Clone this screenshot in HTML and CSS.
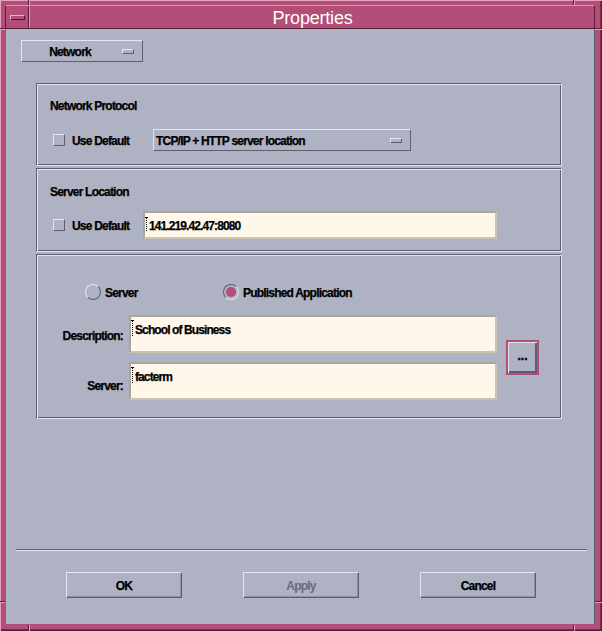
FILE: index.html
```html
<!DOCTYPE html>
<html>
<head>
<meta charset="utf-8">
<title>Properties</title>
<link rel="stylesheet" href="styles.css">
</head>
<body>
<div class="window">
  <span class="tick tick-t1"></span><span class="tick tick-t2"></span>
  <span class="tick tick-b1"></span><span class="tick tick-b2"></span>
  <span class="htick htick-l1"></span><span class="htick htick-l2"></span>
  <span class="htick htick-r1"></span><span class="htick htick-r2"></span>
  <div class="titlebar">
    <div class="menubtn"><span class="menuglyph"></span></div>
    <div class="title">Properties</div>
  </div>
  <div class="client">
    <div class="option option-network">
      <span class="option-label">Network</span>
      <span class="indicator"></span>
    </div>

    <div class="frames">
      <div class="frame frame-protocol">
        <div class="frame-title">Network Protocol</div>
        <div class="row">
          <span class="check"></span>
          <span class="check-label label-protocol">Use Default</span>
          <div class="option option-protocol">
            <span class="option-label">TCP/IP + HTTP server location</span>
            <span class="indicator"></span>
          </div>
        </div>
      </div>

      <div class="frame frame-location">
        <div class="frame-title">Server Location</div>
        <div class="row">
          <span class="check"></span>
          <span class="check-label label-location">Use Default</span>
          <div class="field field-location"><span class="caret"></span>141.219.42.47:8080</div>
        </div>
      </div>

      <div class="frame frame-app">
        <div class="radios">
          <div class="radio-item radio-server">
            <span class="radio"></span><span class="radio-label">Server</span>
          </div>
          <div class="radio-item">
            <span class="radio radio-on"><span class="radio-dot"></span></span><span class="radio-label">Published Application</span>
          </div>
        </div>
        <div class="appgrid">
          <div class="grid-label label-desc">Description:</div>
          <div class="field field-big"><span class="caret"></span>School of Business</div>
          <button class="browse">...</button>
          <div class="grid-label label-server">Server:</div>
          <div class="field field-big"><span class="caret"></span>facterm</div>
        </div>
      </div>
    </div>

    <div class="separator"></div>

    <div class="buttons">
      <button class="btn">OK</button>
      <button class="btn btn-disabled">Apply</button>
      <button class="btn">Cancel</button>
    </div>
  </div>
</div>
</body>
</html>
```
FILE: styles.css
```css
html, body {
  margin: 0;
  padding: 0;
  background: #aeb2c3;
}

body {
  font-family: "Liberation Sans", Arial, sans-serif;
  font-size: 12px;
  font-weight: bold;
  line-height: 14px;
  color: #000;
}

.window {
  position: relative;
  width: 602px;
  height: 631px;
  box-sizing: border-box;
  padding: 5px 7px 7px 6px;
  background: #b24e78;
  display: flex;
  flex-direction: column;
  box-shadow: inset 1px 1px 0 #e2a3bd, inset -1px -1px 0 #5a1d39, inset -2px -2px 0 #7e2f51;
}

/* frame resize handle ticks */
.tick {
  position: absolute;
  width: 1px;
  height: 5px;
  background: #5a1d39;
  box-shadow: 1px 0 0 #e2a3bd;
}
.tick-t1 { left: 28px; top: 0; }
.tick-t2 { left: 573px; top: 0; }
.tick-b1 { left: 28px; bottom: 0; height: 6px; }
.tick-b2 { left: 573px; bottom: 0; height: 6px; }
.htick {
  position: absolute;
  width: 5px;
  height: 1px;
  background: #5a1d39;
  box-shadow: 0 1px 0 #e2a3bd;
}
.htick-l1 { left: 0; top: 28px; }
.htick-l2 { left: 0; top: 601px; }
.htick-r1 { right: 0; top: 28px; width: 7px; }
.htick-r2 { right: 0; top: 601px; width: 7px; }

.titlebar {
  height: 24px;
  margin-left: -1px;
  box-sizing: border-box;
  display: flex;
  align-items: stretch;
  background: #b24e78;
  border-top: 1px solid #dc97b4;
  border-bottom: 1px solid #5a1d39;
  border-left: 1px solid #5a1d39;
  border-right: 1px solid #5a1d39;
}

.menubtn {
  width: 22px;
  display: flex;
  align-items: center;
  border-right: 1px solid #5a1d39;
  box-shadow: 1px 0 0 #dc97b4;
}

.menuglyph {
  display: block;
  width: 13px;
  height: 3px;
  margin-left: 4px;
  margin-top: 1px;
  background: #b24e78;
  border-top: 1px solid #eab2c9;
  border-left: 1px solid #eab2c9;
  border-bottom: 1px solid #4e1731;
  border-right: 1px solid #4e1731;
}

.title {
  flex: 1;
  text-align: center;
  color: #fff;
  font-weight: normal;
  font-size: 18px;
  line-height: 22px;
  padding-top: 1px;
  letter-spacing: -0.2px;
  padding-left: 2px;
}

.client {
  flex: 1;
  background: #aeb2c3;
  display: flex;
  flex-direction: column;
  align-items: flex-start;
  padding-top: 11px;
  box-shadow: inset -1px 0 0 #5b5f70;
  letter-spacing: -0.8px;
  -webkit-text-stroke: 0.25px #000;
}

/* option menus */
.option {
  box-sizing: border-box;
  display: flex;
  align-items: center;
  background: #aeb2c3;
  border-top: 1px solid #e4e6ee;
  border-left: 1px solid #e4e6ee;
  border-bottom: 1px solid #5b5f70;
  border-right: 1px solid #5b5f70;
}

.option-label {
  padding-top: 2px;
}

.option-network {
  margin-left: 15px;
  width: 122px;
  height: 22px;
}
.option-network .option-label {
  flex: 1;
  text-align: center;
  margin-right: 4px;
}

.option-protocol {
  width: 258px;
  height: 22px;
}
.option-protocol .option-label {
  flex: 1;
  padding-left: 2px;
}

.indicator {
  display: block;
  box-sizing: border-box;
  width: 12px;
  height: 5px;
  margin-right: 8px;
  background: #aeb2c3;
  border-top: 1px solid #e4e6ee;
  border-left: 1px solid #e4e6ee;
  border-bottom: 1px solid #5b5f70;
  border-right: 1px solid #5b5f70;
}

/* frames */
.frames {
  margin-top: 21px;
  margin-left: 30px;
  width: 526px;
  display: flex;
  flex-direction: column;
  gap: 2px;
}

.frame {
  box-sizing: border-box;
  padding: 15px 13px 0 13px;
  border-top: 1px solid #5b5f70;
  border-left: 1px solid #5b5f70;
  border-bottom: 1px solid #e4e6ee;
  border-right: 1px solid #e4e6ee;
  box-shadow: inset 1px 1px 0 #e4e6ee, inset -1px -1px 0 #5b5f70;
}

.frame-protocol { height: 83px; }
.frame-location { height: 84px; }
.frame-location .frame-title { padding-top: 1px; }
.frame-location .row { margin-top: 12px; }
.frame-app { height: 165px; padding-top: 29px; }

.row {
  margin-top: 13px;
  height: 28px;
  display: flex;
  align-items: center;
}

.check {
  display: block;
  box-sizing: border-box;
  width: 12px;
  height: 12px;
  margin-left: 3px;
  border-top: 1px solid #e4e6ee;
  border-left: 1px solid #e4e6ee;
  border-bottom: 1px solid #5b5f70;
  border-right: 1px solid #5b5f70;
}

.check-label {
  margin-left: 7px;
  padding-top: 2px;
}
.label-protocol { width: 81px; }
.label-location { width: 71px; }

/* text fields */
.field {
  position: relative;
  box-sizing: border-box;
  background: #fff7e9;
  border-top: 2px solid #aaa697;
  border-left: 2px solid #aaa697;
  border-bottom: 2px solid #c9c3b0;
  border-right: 2px solid #c9c3b0;
  padding-left: 4px;
  letter-spacing: -0.9px;
}

.field-location {
  width: 354px;
  height: 28px;
  padding-top: 6px;
}

.field-big {
  height: 38px;
  padding-top: 6px;
}

.caret {
  position: absolute;
  left: 1px;
  top: 4px;
  width: 1px;
  height: 14px;
  border-left: 1px dotted #000;
}
.field-big .caret { top: 3px; height: 16px; }
.caret::before {
  content: "";
  position: absolute;
  left: -2px;
  top: 0;
  width: 3px;
  height: 1px;
  border-top: 1px dotted #000;
}

/* radios */
.radios {
  display: flex;
  align-items: center;
  height: 16px;
}

.radio-item {
  display: flex;
  align-items: center;
}

.radio-server {
  width: 138px;
  margin-left: 35px;
}

.radio {
  display: flex;
  align-items: center;
  justify-content: center;
  box-sizing: border-box;
  width: 16px;
  height: 16px;
  border-radius: 50%;
  border-top: 1px solid #e4e6ee;
  border-left: 1px solid #e4e6ee;
  border-bottom: 1px solid #5b5f70;
  border-right: 1px solid #5b5f70;
}

.radio-on {
  border-top-color: #5b5f70;
  border-left-color: #5b5f70;
  border-bottom-color: #e4e6ee;
  border-right-color: #e4e6ee;
}

.radio-dot {
  display: block;
  width: 10px;
  height: 10px;
  border-radius: 50%;
  background: #b24e78;
}

.radio-label {
  margin-left: 4px;
  padding-top: 2px;
}

.appgrid {
  margin-top: 15px;
  display: grid;
  grid-template-columns: 73px 368px 36px;
  grid-template-rows: 38px 38px;
  column-gap: 6px;
  row-gap: 9px;
}

.grid-label {
  text-align: right;
  align-self: start;
}
.label-desc { margin-top: 14px; }
.label-server { margin-top: 17px; }

.browse {
  grid-column: 3;
  grid-row: 1 / 3;
  align-self: center;
  margin: 0 0 0 3px;
  width: 33px;
  height: 35px;
  box-sizing: border-box;
  padding: 0 0 4px 0;
  background: #aeb2c3;
  font: inherit;
  letter-spacing: 0;
  color: #000;
  -webkit-text-stroke: 0.4px #000;
  border: 2px solid #b24e78;
  box-shadow: inset 1px 1px 0 #e4e6ee, inset -1px -1px 0 #5b5f70, inset -2px -2px 0 #5b5f70;
}

.separator {
  margin-top: 130px;
  margin-left: 10px;
  width: 571px;
  border-top: 1px solid #5b5f70;
  border-bottom: 1px solid #e4e6ee;
  height: 0;
}

.buttons {
  margin-top: 21px;
  margin-left: 60px;
  display: flex;
  gap: 61px;
}

.btn {
  width: 116px;
  height: 26px;
  box-sizing: border-box;
  padding: 2px 0 0 0;
  margin: 0;
  background: #aeb2c3;
  font: inherit;
  letter-spacing: -0.8px;
  color: #000;
  -webkit-text-stroke: 0.25px #000;
  border-top: 1px solid #e4e6ee;
  border-left: 1px solid #e4e6ee;
  border-bottom: 1px solid #5b5f70;
  border-right: 1px solid #5b5f70;
  box-shadow: inset -1px -1px 0 #8c90a0;
}

.btn-disabled {
  color: #666a7b;
  -webkit-text-stroke: 0;
}
```
